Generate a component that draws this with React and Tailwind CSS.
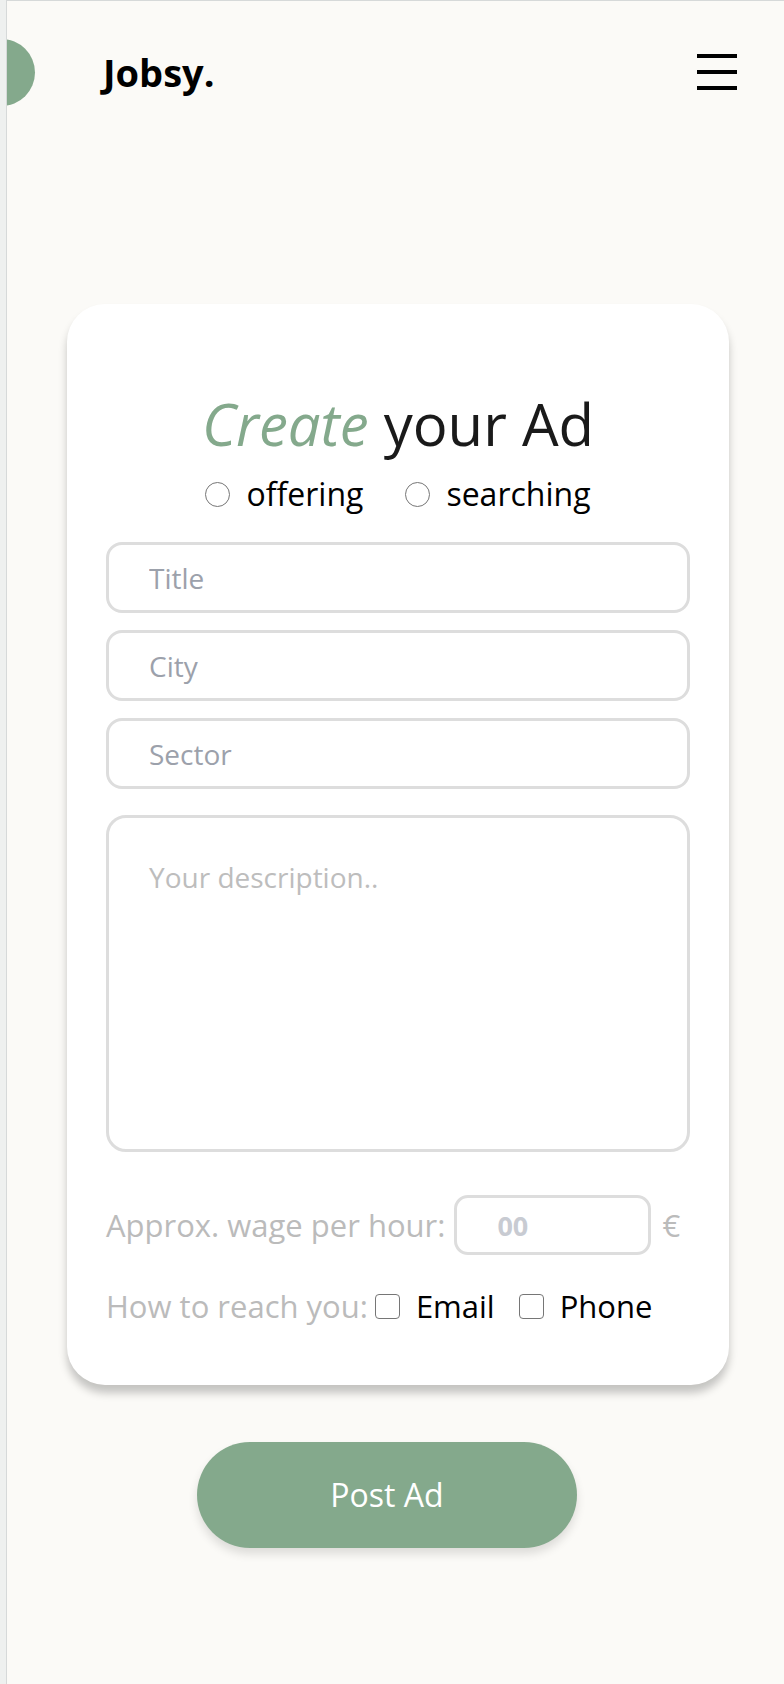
import { useState } from 'react';

const FONT = { fontFamily: '"Open Sans", "Noto Sans", sans-serif' };

function Field({ placeholder }) {
    return (
        <input
            type="text"
            placeholder={placeholder}
            className="w-full h-[71px] rounded-[16px] border-[3px] border-[#dddddd] bg-white pl-[40px] text-[28px] text-gray-700 outline-none placeholder:text-[#9ca1ab]"
        />
    );
}

function Radio({ label, checked, onChange }) {
    return (
        <label className="flex items-center gap-[16px] cursor-pointer">
            <span
                onClick={onChange}
                className="w-[25px] h-[25px] rounded-full border-[1.5px] border-[#767676] bg-white flex items-center justify-center"
            >
                {checked && <span className="w-[13px] h-[13px] rounded-full bg-[#84a98c]" />}
            </span>
            <span className="text-[32px] leading-[48px] text-black">{label}</span>
        </label>
    );
}

function Check({ label }) {
    const [on, setOn] = useState(false);
    return (
        <label className="flex items-center gap-[16px] cursor-pointer">
            <span
                onClick={() => setOn(!on)}
                className="w-[25px] h-[25px] rounded-[4px] border-[1.5px] border-[#767676] bg-white"
            />
            <span className="text-[31px] text-black">{label}</span>
        </label>
    );
}

export default function App() {
    const [kind, setKind] = useState(null);

    return (
        <div className="flex min-h-[1684px] bg-[#eef0ef]" style={FONT}>
            {/* left frame strip */}
            <div className="w-[6px] shrink-0" />

            <main className="relative flex-1 overflow-hidden border-l border-t border-[#d6d9d9] bg-[#fbfaf7]">
                {/* decorative dot */}
                <div className="absolute left-[-39px] top-[38px] w-[67px] h-[67px] rounded-full bg-[#84a98c]" />

                {/* Header */}
                <header className="flex items-center justify-between h-[142px] pl-[96px] pr-[47px]">
                    <span className="text-[38px] leading-none font-bold text-black">Jobsy.</span>
                    <button className="flex flex-col gap-[12px] w-[40px]">
                        <span className="h-[4px] w-full bg-black" />
                        <span className="h-[4px] w-full bg-black" />
                        <span className="h-[4px] w-full bg-black" />
                    </button>
                </header>

                {/* Card */}
                <section className="ml-[60px] mt-[161px] w-[662px] rounded-[38px] bg-white px-[39px] pt-[91px] pb-[55px] shadow-[0_8px_8px_rgba(0,0,0,0.22)]">
                    <h1 className="text-center text-[58px] leading-none text-[#1a1a1a]">
                        <span className="italic text-[#84a98c]">Create</span> your Ad
                    </h1>
                    <div className="mt-[17px] flex items-center justify-center gap-[42px]">
                        <Radio label="offering" checked={kind === 'o'} onChange={() => setKind('o')} />
                        <Radio label="searching" checked={kind === 's'} onChange={() => setKind('s')} />
                    </div>

                    <div className="mt-[24px] flex flex-col gap-[17px]">
                        <Field placeholder="Title" />
                        <Field placeholder="City" />
                        <Field placeholder="Sector" />
                        <textarea
                            placeholder="Your description.."
                            className="mt-[9px] h-[337px] w-full resize-none rounded-[20px] border-[3px] border-[#dddddd] bg-white pl-[40px] pt-[38px] text-[28px] outline-none placeholder:text-[#bdbdbd]"
                        />
                    </div>

                    <div className="mt-[43px] flex items-center text-[31px] text-[#bbbbbb]">
                        <span>Approx. wage per hour:</span>
                        <input
                            type="text"
                            placeholder="00"
                            className="ml-[9px] h-[60px] w-[197px] shrink-0 rounded-[14px] border-[3px] border-[#dddddd] bg-white pl-[40px] text-[27px] font-bold outline-none placeholder:text-[#c8cbd2]"
                        />
                        <span className="ml-[11px]">€</span>
                    </div>

                    <div className="mt-[28px] flex items-center text-[31px] text-[#bbbbbb]">
                        <span className="mr-[7px]">How to reach you:</span>
                        <div className="flex items-center gap-[24px]">
                            <Check label="Email" />
                            <Check label="Phone" />
                        </div>
                    </div>
                </section>

                <button className="ml-[190px] mt-[57px] h-[106px] w-[380px] rounded-full bg-[#84a98c] text-[32px] text-white shadow-[0_6px_10px_rgba(0,0,0,0.12)]">
                    Post Ad
                </button>
            </main>
        </div>
    );
}
